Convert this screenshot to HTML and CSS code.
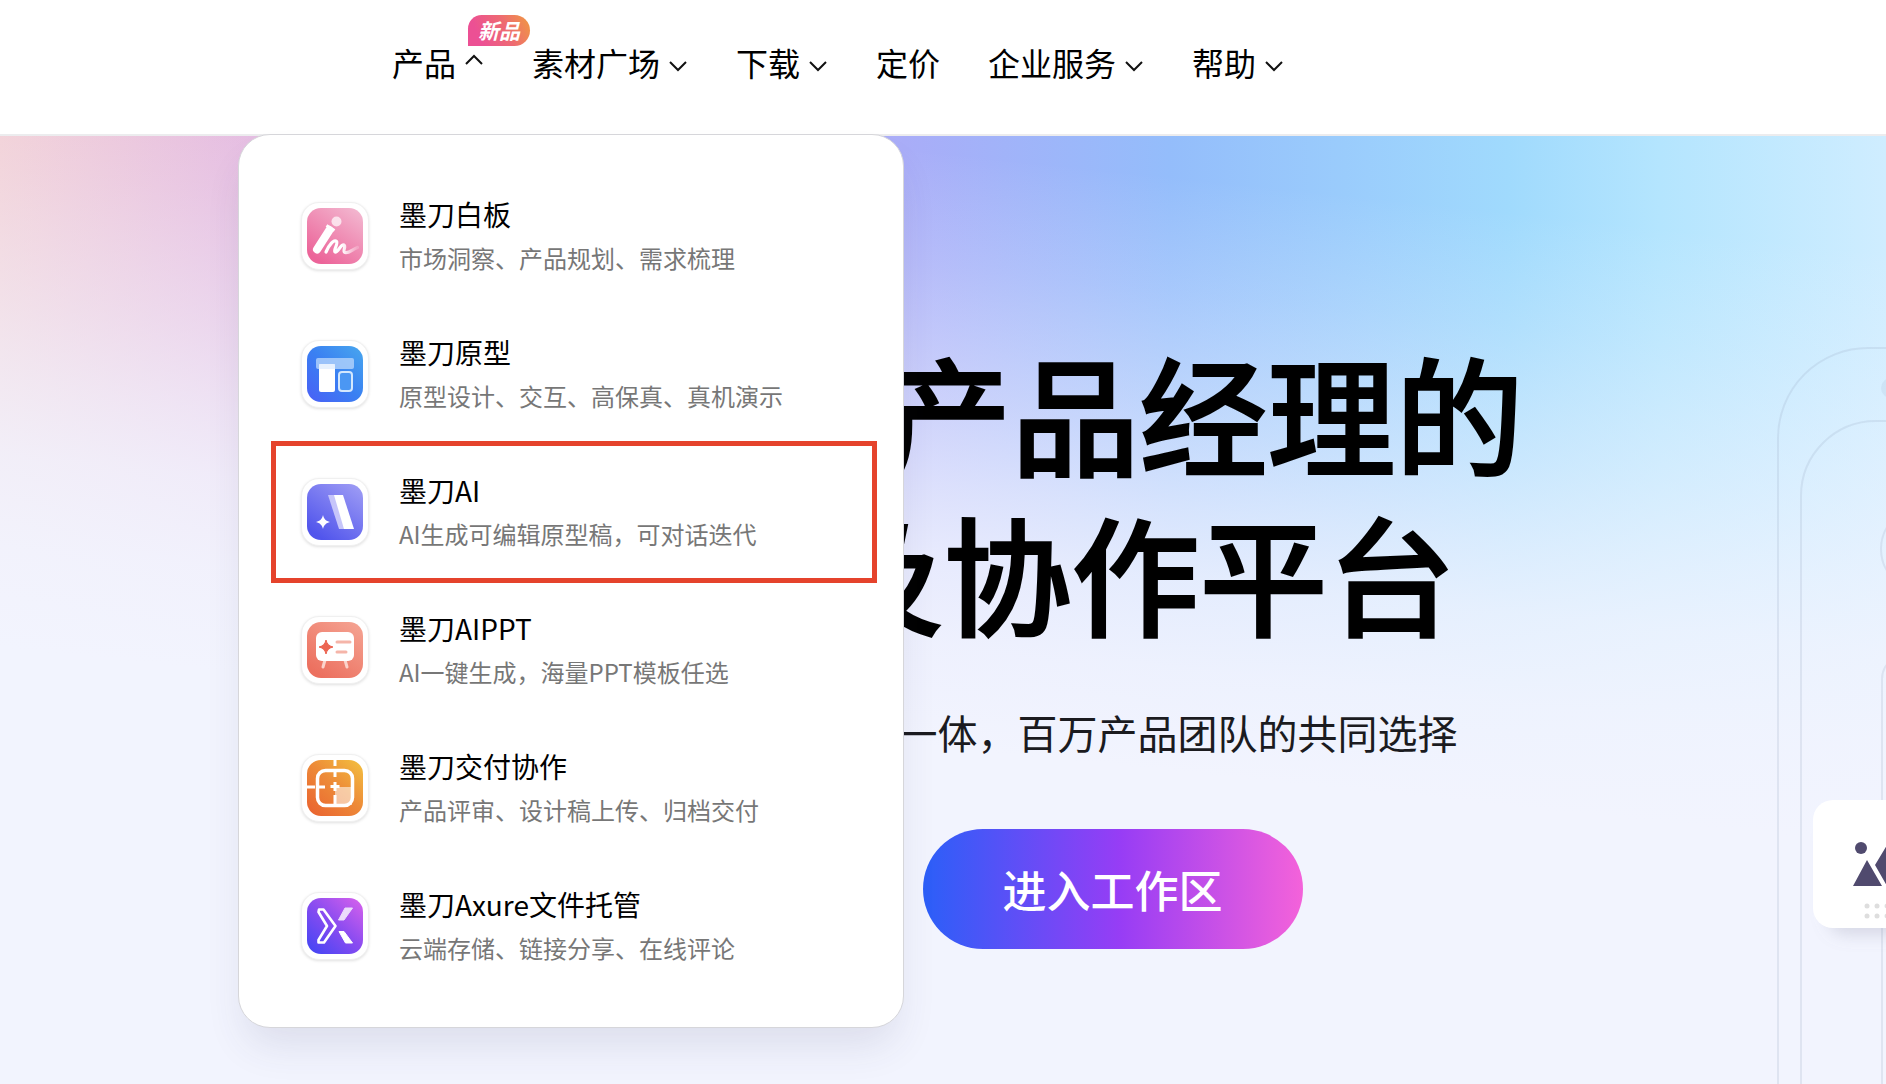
FILE: index.html
```html
<!DOCTYPE html>
<html lang="zh-CN">
<head>
<meta charset="utf-8">
<meta name="viewport" content="width=device-width, initial-scale=1">
<title>墨刀</title>
<link rel="stylesheet" href="styles.css">
</head>
<body>
<header class="header">
  <nav class="nav" aria-label="主导航">
    <button class="nav-item" type="button" aria-expanded="true" aria-controls="product-menu">产品
      <svg class="chevron chevron-up" viewBox="0 0 20 20" aria-hidden="true"><path d="M2 14 10 6l8 8"/></svg>
      <span class="badge">新品</span>
    </button>
    <button class="nav-item" type="button">素材广场
      <svg class="chevron" viewBox="0 0 20 20" aria-hidden="true"><path d="M2 6l8 8 8-8"/></svg>
    </button>
    <button class="nav-item" type="button">下载
      <svg class="chevron" viewBox="0 0 20 20" aria-hidden="true"><path d="M2 6l8 8 8-8"/></svg>
    </button>
    <a class="nav-item" href="#">定价</a>
    <button class="nav-item" type="button">企业服务
      <svg class="chevron" viewBox="0 0 20 20" aria-hidden="true"><path d="M2 6l8 8 8-8"/></svg>
    </button>
    <button class="nav-item" type="button">帮助
      <svg class="chevron" viewBox="0 0 20 20" aria-hidden="true"><path d="M2 6l8 8 8-8"/></svg>
    </button>
  </nav>

  <div class="menu" id="product-menu">
    <a class="menu-item" href="#">
      <span class="app-icon">
        <svg viewBox="0 0 56 56" aria-hidden="true">
          <defs>
            <linearGradient id="g1" x1="1" y1="0" x2="0.3" y2="1"><stop offset="0" stop-color="#f3bcd3"/><stop offset="1" stop-color="#ec6499"/></linearGradient>
            <linearGradient id="g1s" x1="0" x2="1" y1="0" y2="0"><stop offset="0.5" stop-color="#fff"/><stop offset="1" stop-color="#fff" stop-opacity="0.2"/></linearGradient>
          </defs>
          <rect width="56" height="56" rx="14" fill="url(#g1)"/>
          <path d="M10 41.500 22.500 22" stroke="#fff" stroke-width="8" stroke-linecap="round"/>
          <path d="M19.500 17.500 27.500 22.500" stroke="#fff" stroke-width="3"/>
          <circle cx="29.500" cy="13.500" r="5" fill="#fff" fill-opacity="0.7"/>
          <path d="M19 44C22 37 27 31 29.500 33.500c2 2-3.500 9-1.500 10.500 2.500 1.500 6-8.500 9-7 2.500 1.500-2 6.500 1 7.500 4 1 7-3 12.500-5" fill="none" stroke="url(#g1s)" stroke-width="3.200" stroke-linecap="round"/>
        </svg>
      </span>
      <span class="menu-text"><span class="menu-title">墨刀白板</span><span class="menu-desc">市场洞察、产品规划、需求梳理</span></span>
    </a>
    <a class="menu-item" href="#">
      <span class="app-icon">
        <svg viewBox="0 0 56 56" aria-hidden="true">
          <defs><linearGradient id="g2" x1="1" y1="0" x2="0" y2="1"><stop offset="0" stop-color="#48a7ee"/><stop offset="0.5" stop-color="#3a80f2"/><stop offset="1" stop-color="#4a5ff6"/></linearGradient></defs>
          <rect width="56" height="56" rx="14" fill="url(#g2)"/>
          <rect x="12" y="18" width="16" height="28" rx="2" fill="#fff"/>
          <rect x="9" y="12" width="38" height="11" rx="2" fill="#b4d3fb" fill-opacity="0.8"/>
          <rect x="12" y="18" width="16" height="5" fill="#fff" fill-opacity="0.6"/>
          <rect x="32" y="26" width="13" height="19" rx="3" fill="#4b97f3" stroke="#d4e8fd" stroke-width="2"/>
        </svg>
      </span>
      <span class="menu-text"><span class="menu-title">墨刀原型</span><span class="menu-desc">原型设计、交互、高保真、真机演示</span></span>
    </a>
    <a class="menu-item menu-item-marked" href="#">
      <span class="app-icon">
        <svg viewBox="0 0 56 56" aria-hidden="true">
          <defs><linearGradient id="g3" x1="1" y1="0" x2="0.3" y2="1"><stop offset="0" stop-color="#a19ff5"/><stop offset="1" stop-color="#5155ec"/></linearGradient></defs>
          <rect width="56" height="56" rx="14" fill="url(#g3)"/>
          <path d="M21 11h7l11 34h-7z" fill="#c6c5fa"/>
          <path d="M27 11h9l11 34H37z" fill="#fff"/>
          <path d="M16 31c1 4 3 6 7 7-4 1-6 3-7 7-1-4-3-6-7-7 4-1 6-3 7-7z" fill="#fff"/>
        </svg>
      </span>
      <span class="menu-text"><span class="menu-title">墨刀AI</span><span class="menu-desc">AI生成可编辑原型稿，可对话迭代</span></span>
    </a>
    <a class="menu-item" href="#">
      <span class="app-icon">
        <svg viewBox="0 0 56 56" aria-hidden="true">
          <defs><linearGradient id="g4" x1="1" y1="0" x2="0.3" y2="1"><stop offset="0" stop-color="#f5a594"/><stop offset="1" stop-color="#ec705f"/></linearGradient></defs>
          <rect width="56" height="56" rx="14" fill="url(#g4)"/>
          <path d="M18 38l-2 7M38 38l2 7" stroke="#fbd3cb" stroke-width="3" stroke-linecap="round"/>
          <rect x="9" y="10" width="38" height="29" rx="6" fill="#fff"/>
          <path d="M19 18c1 4 3 6 7 7-4 1-6 3-7 7-1-4-3-6-7-7 4-1 6-3 7-7z" fill="#ec6552" stroke="#ec6552" stroke-linejoin="round"/>
          <path d="M30 20h13M30 30h9" stroke="#f5b5a9" stroke-width="3" stroke-linecap="round"/>
        </svg>
      </span>
      <span class="menu-text"><span class="menu-title">墨刀AIPPT</span><span class="menu-desc">AI一键生成，海量PPT模板任选</span></span>
    </a>
    <a class="menu-item" href="#">
      <span class="app-icon">
        <svg viewBox="0 0 56 56" aria-hidden="true">
          <defs><linearGradient id="g5" x1="1" y1="0" x2="0.1" y2="1"><stop offset="0" stop-color="#f3c13f"/><stop offset="0.500" stop-color="#ed8a38"/><stop offset="1" stop-color="#ea6430"/></linearGradient></defs>
          <rect width="56" height="56" rx="14" fill="url(#g5)"/>
          <path d="M28 27h17v18H28z" fill="#fff" fill-opacity="0.55"/>
          <rect x="10.500" y="10.500" width="35" height="35" rx="8" fill="none" stroke="#fff" stroke-width="3.500"/>
          <path d="M28 0v6M28 10v7M0 27h8M10 27h8M28 35v10M28 22v9M23.500 26.500h9" stroke="#fff" stroke-width="3"/>
        </svg>
      </span>
      <span class="menu-text"><span class="menu-title">墨刀交付协作</span><span class="menu-desc">产品评审、设计稿上传、归档交付</span></span>
    </a>
    <a class="menu-item" href="#">
      <span class="app-icon">
        <svg viewBox="0 0 56 56" aria-hidden="true">
          <defs><linearGradient id="g6" x1="1" y1="0" x2="0.1" y2="1"><stop offset="0" stop-color="#da62ec"/><stop offset="0.500" stop-color="#8b4cf0"/><stop offset="1" stop-color="#4545f4"/></linearGradient></defs>
          <rect width="56" height="56" rx="14" fill="url(#g6)"/>
          <path d="M12 11.500h4.500L28.500 28 17 44.500h-5.500l0-2.500 8.500-14-8.500-14z" fill="none" stroke="#fff" stroke-width="2.600" stroke-linejoin="round"/>
          <path d="M38 10h7.500L37 22h-5.500z" fill="#ecdcfb" stroke="#ecdcfb" stroke-linejoin="round"/>
          <path d="M32 33.500h5L45.500 45h-7z" fill="#fff" stroke="#fff" stroke-linejoin="round"/>
        </svg>
      </span>
      <span class="menu-text"><span class="menu-title">墨刀Axure文件托管</span><span class="menu-desc">云端存储、链接分享、在线评论</span></span>
    </a>
  </div>
</header>

<main class="hero">
  <section class="hero-copy">
    <h1 class="hero-title"><span class="hero-line hero-line-first">产品经理的</span><span class="hero-line">及协作平台</span></h1>
    <p class="hero-sub">一体，百万产品团队的共同选择</p>
    <button class="cta" type="button">进入工作区</button>
  </section>
  <svg class="hero-art" viewBox="0 0 109 737" preserveAspectRatio="xMinYMin slice" aria-hidden="true">
    <defs>
      <filter id="soft" x="-50%" y="-50%" width="200%" height="200%"><feGaussianBlur stdDeviation="8"/></filter>
    </defs>
    <g fill="none" stroke="#96a5be" stroke-opacity="0.2" stroke-width="2">
      <path d="M1 760V91A90 90 0 0 1 91 1h120"/>
      <path d="M24 760V149A75 75 0 0 1 99 74h120"/>
      <circle cx="146" cy="202" r="42"/>
      <path d="M105 760V332a24 24 0 0 1 24-24h40"/>
    </g>
    <circle cx="114" cy="41" r="10" fill="#96a5be" fill-opacity="0.14"/>
    <rect x="50" y="474" width="110" height="114" rx="20" fill="#8284a0" fill-opacity="0.25" filter="url(#soft)"/>
    <rect x="36" y="453" width="130" height="128" rx="20" fill="#fff"/>
    <g fill="#504a6e">
      <circle cx="84" cy="501" r="6"/>
      <path d="M76 539l14-26 15 26zM98 518l15-25v46h-3z"/>
    </g>
    <g fill="#dedede">
      <circle cx="90" cy="559" r="2.500"/><circle cx="100" cy="559" r="2.500"/><circle cx="110" cy="559" r="2.500"/>
      <circle cx="90" cy="569" r="2.500"/><circle cx="100" cy="569" r="2.500"/><circle cx="110" cy="569" r="2.500"/>
    </g>
  </svg>
</main>
</body>
</html>
```
FILE: styles.css
```css
* {
  box-sizing: border-box;
}

body {
  margin: 0;
  min-height: 100vh;
  display: flex;
  flex-direction: column;
  overflow-x: hidden;
  background: #f2f4fe;
  color: #000;
  font-family: "Noto Sans CJK SC", sans-serif;
}

button {
  border: 0;
  background: none;
  color: inherit;
  font-family: inherit;
  cursor: pointer;
}

a {
  color: inherit;
  text-decoration: none;
}

/* Header */
.header {
  position: relative;
  z-index: 1;
  background: #fff;
  border-bottom: 2px solid #ececee;
}

.nav {
  display: flex;
  gap: 48px;
  padding: 38px 0 48px 392px;
}

.nav-item {
  position: relative;
  display: flex;
  align-items: center;
  gap: 8px;
  padding: 0;
  font-size: 32px;
  line-height: 48px;
  white-space: nowrap;
}

.chevron {
  width: 20px;
  height: 20px;
  margin-top: 8px;
  fill: none;
  stroke: #111;
  stroke-width: 2;
}

.chevron-up {
  margin: 0 0 4px;
}

.badge {
  position: absolute;
  left: 76px;
  top: -23px;
  padding: 0 10px;
  border-radius: 14px 16px 16px 0;
  background: linear-gradient(65deg, #ec5094 20%, #ee6a72 60%, #f09a40);
  color: #fff;
  font-size: 21px;
  font-style: italic;
  font-weight: 700;
  line-height: 31px;
}

/* Product menu */
.menu {
  position: absolute;
  left: 238px;
  top: 134px;
  width: 666px;
  padding: 32px 28px 32px 34px;
  border: 1px solid #d6d6da;
  border-radius: 32px;
  background: #fff;
  box-shadow: 0 24px 40px -8px rgba(60, 60, 100, 0.12);
}

.menu-item {
  display: flex;
  align-items: center;
  gap: 30px;
  height: 138px;
  padding-left: 28px;
}

.menu-item-marked {
  outline: 5px solid #e5432c;
  outline-offset: -3px;
}

.app-icon {
  flex: none;
  display: grid;
  place-items: center;
  width: 68px;
  height: 68px;
  border: 1px solid #f0f0f0;
  border-radius: 18px;
  background: #fff;
  box-shadow: 0 1px 3px rgba(0, 0, 0, 0.12);
}

.app-icon svg {
  width: 56px;
  height: 56px;
}

.menu-text {
  display: flex;
  flex-direction: column;
  gap: 4px;
}

.menu-title {
  font-size: 28px;
  line-height: 40px;
}

.menu-desc {
  color: #777;
  font-size: 24px;
  line-height: 40px;
}

/* Hero */
.hero {
  flex: 1;
  display: grid;
  grid-template-columns: 1fr 109px;
  background:
    linear-gradient(186deg, rgba(242, 244, 254, 0) 10%, rgba(242, 244, 254, 0.2) 20%, rgba(242, 244, 254, 0.5) 32%, rgba(242, 244, 254, 0.7) 39%, rgba(242, 244, 254, 0.85) 45%, rgba(242, 244, 254, 0.95) 53%, #f2f4fe 62%),
    linear-gradient(90deg, #f2ced4 0%, #e4b8df 13%, #c8b2ee 32%, #a9adf8 48%, #94bdfb 62%, #a0dafd 80%, #b4e5fe 88%, #cfedff 100%);
}

.hero-copy {
  padding: 196px 0 132px calc(50% - 73px);
}

.hero-title {
  margin: 0;
  font-size: 128px;
  font-weight: 500;
  line-height: 160px;
  white-space: nowrap;
  -webkit-text-stroke: 2px #000;
}

.hero-line {
  display: block;
}

.hero-line-first {
  margin-left: 68px;
}

.hero-sub {
  margin: 50px 0 67px 82px;
  color: #1b1b1f;
  font-size: 40px;
  line-height: 60px;
  white-space: nowrap;
}

.cta {
  margin-left: 107px;
  padding: 0 80px;
  border-radius: 60px;
  background: linear-gradient(90deg, #2b5ff8 0%, #973df5 52%, #f462da 100%);
  color: #fff;
  font-size: 44px;
  font-weight: 500;
  line-height: 120px;
  white-space: nowrap;
}

.hero-art {
  width: 109px;
  height: calc(100% - 211px);
  margin-top: 211px;
}
```
